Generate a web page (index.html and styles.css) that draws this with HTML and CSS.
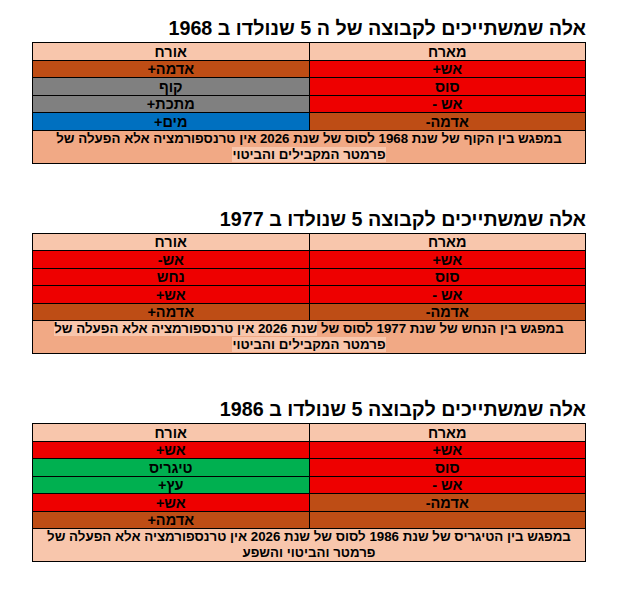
FILE: index.html
```html
<!DOCTYPE html>
<html lang="he" dir="rtl">
<head>
<meta charset="utf-8">
<title>קבוצות</title>
<link rel="stylesheet" href="styles.css">
</head>
<body>
<main class="page">
  <section class="group">
    <h2 class="title">אלה שמשתייכים לקבוצה של ה 5 שנולדו ב 1968</h2>
    <table class="grid">
      <tr class="head"><td>מארח</td><td>אורח</td></tr>
      <tr><td class="red">אש+</td><td class="brown">אדמה+</td></tr>
      <tr><td class="red">סוס</td><td class="grey">קוף</td></tr>
      <tr><td class="red">אש -</td><td class="grey">מתכת+</td></tr>
      <tr><td class="brown">אדמה-</td><td class="blue">מים+</td></tr>
      <tr><td class="note dark" colspan="2">במפגש בין הקוף של שנת 1968 לסוס של שנת 2026 אין טרנספורמציה אלא הפעלה של<br><span class="hl">פרמטר המקבילים והביטוי</span></td></tr>
    </table>
  </section>

  <section class="group">
    <h2 class="title">אלה שמשתייכים לקבוצה 5 שנולדו ב 1977</h2>
    <table class="grid">
      <tr class="head"><td>מארח</td><td>אורח</td></tr>
      <tr><td class="red">אש+</td><td class="red">אש-</td></tr>
      <tr><td class="red">סוס</td><td class="red">נחש</td></tr>
      <tr><td class="red">אש -</td><td class="red">אש+</td></tr>
      <tr><td class="brown">אדמה-</td><td class="brown">אדמה+</td></tr>
      <tr><td class="note dark" colspan="2">במפגש בין הנחש של שנת 1977 לסוס של <span class="hl">שנת 2026 אין טרנספורמציה אלא הפעלה של</span><br><span class="hl">פרמטר המקבילים והביטוי</span></td></tr>
    </table>
  </section>

  <section class="group">
    <h2 class="title">אלה שמשתייכים לקבוצה 5 שנולדו ב 1986</h2>
    <table class="grid">
      <tr class="head"><td>מארח</td><td>אורח</td></tr>
      <tr><td class="red">אש+</td><td class="red">אש+</td></tr>
      <tr><td class="red">סוס</td><td class="green">טיגריס</td></tr>
      <tr><td class="red">אש -</td><td class="green">עץ+</td></tr>
      <tr><td class="brown">אדמה-</td><td class="red">אש+</td></tr>
      <tr><td class="brown"></td><td class="brown">אדמה+</td></tr>
      <tr><td class="note light" colspan="2">במפגש בין הטיגריס של שנת 1986 לסוס של שנת 2026 אין טרנספורמציה אלא הפעלה של<br>פרמטר והביטוי והשפע</td></tr>
    </table>
  </section>
</main>
</body>
</html>
```

FILE: styles.css
```css
body {
  margin: 0;
  background: #ffffff;
  color: #000000;
  font-family: "Liberation Sans", Arial, sans-serif;
}

.page {
  width: 554px;
  margin: 0 auto 0 32px;
  padding-top: 17px;
  display: flex;
  flex-direction: column;
  gap: 44px;
}

.title {
  margin: 0 0 3px 0;
  font-size: 19.7px;
  line-height: 22px;
  font-weight: bold;
  text-align: right;
}

.grid {
  width: 554px;
  border-collapse: collapse;
  table-layout: fixed;
  border: 1px solid #000;
}

.grid td {
  width: 50%;
  height: 16.5px;
  padding: 0;
  border: 1px solid #000;
  text-align: center;
  vertical-align: bottom;
  font-size: 14.5px;
  line-height: 16px;
  font-weight: bold;
}

.head td { background: #f8c6ac; }
.red { background: #ee0000; }
.brown { background: #be4d15; }
.grey { background: #808080; }
.blue { background: #0070c0; }
.green { background: #00b050; }

.grid td.note {
  height: 32px;
  vertical-align: middle;
  font-size: 13.3px;
}

.dark { background: #f1a985; }
.light { background: #f8c6ac; }
.hl { background: #f8c6ac; }
```
